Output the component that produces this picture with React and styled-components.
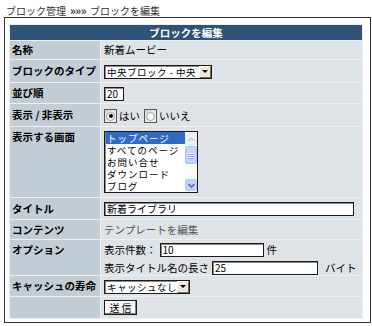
import React from 'react';
import styled, { createGlobalStyle } from 'styled-components';

const Global = createGlobalStyle`
  html, body { margin: 0; padding: 0; background: #fff; }
  body {
    font-family: "Noto Sans CJK JP", "Noto Sans", sans-serif;
    font-size: 10.5px;
    color: #000;
  }
`;

const Page = styled.div`
  width: 372px;
  height: 326px;
  overflow: hidden;
  box-sizing: border-box;
  padding: 3px 0 0 4px;
`;

const Crumb = styled.div`
  font-size: 10px;
  line-height: 14px;
  height: 14px;
  padding-left: 2px;
  color: #333;
  white-space: nowrap;
  b { font-weight: bold; font-size: 11px; letter-spacing: -0.5px; margin: 0 4px; }
`;

const Frame = styled.div`
  width: 367px;
  height: 306px;
  box-sizing: border-box;
  border: 1px solid #333;
  padding: 6px 7px 0 4px;
`;

const Table = styled.table`
  width: 354px;
  border-collapse: separate;
  border-spacing: 1px;
  background: #eef0f2;
  font-size: 10.5px;
  line-height: 14px;
  table-layout: fixed;
`;

const Col = styled.col`
  width: ${p => p.$w}px;
`;

const Th = styled.th`
  background: #2f5376;
  color: #fff;
  font-weight: bold;
  height: 15px;
  padding: 0;
  text-align: center;
  line-height: 15px;
`;

const Label = styled.td`
  background: #c2cdd6;
  font-weight: bold;
  padding: ${p => (p.$top ? '3px 0 0 2px' : '0 0 0 2px')};
  vertical-align: ${p => (p.$top ? 'top' : 'middle')};
  height: ${p => p.$h}px;
  box-sizing: border-box;
  white-space: nowrap;
  overflow: hidden;
`;

const Value = styled.td`
  background: #dee3e7;
  padding: ${p => (p.$top ? '3px 0 0 3px' : '0 0 0 3px')};
  vertical-align: ${p => (p.$top ? 'top' : 'middle')};
  height: ${p => p.$h}px;
  box-sizing: border-box;
  white-space: nowrap;
  color: ${p => (p.$muted ? '#555' : '#000')};
`;

const Field = styled.span`
  display: inline-block;
  vertical-align: middle;
  box-sizing: border-box;
  height: 14px;
  width: ${p => p.$w}px;
  background: #fff;
  border: 1px solid #1a1a1a;
  box-shadow: inset 1px 1px 0 #8a8a8a;
  font-size: 10px;
  line-height: 12px;
  padding-left: 2px;
  overflow: hidden;
`;

const Select = styled.span`
  display: inline-flex;
  vertical-align: middle;
  box-sizing: border-box;
  height: 14px;
  width: ${p => p.$w}px;
  background: #fff;
  border: 1px solid #1a1a1a;
  box-shadow: inset 1px 1px 0 #8a8a8a;
  line-height: 12px;
`;

const SelectText = styled.span`
  flex: 1;
  min-width: 0;
  padding-left: 2px;
  font-size: 9.5px;
  letter-spacing: 0.5px;
  overflow: hidden;
  white-space: nowrap;
`;

const ArrowBtn = styled.span`
  flex: none;
  width: 12px;
  height: 12px;
  box-sizing: border-box;
  background: #ece9d8;
  border: 1px solid;
  border-color: #fff #716f64 #716f64 #fff;
  display: flex;
  align-items: center;
  justify-content: center;
`;

const Triangle = styled.span`
  width: 0;
  height: 0;
  border-left: 3px solid transparent;
  border-right: 3px solid transparent;
  border-top: 3px solid #000;
`;

const RadioRow = styled.span`
  display: inline-flex;
  align-items: center;
  gap: 2px;
`;

const RadioBox = styled.span`
  width: 13px;
  height: 14px;
  box-sizing: border-box;
  border: 1px solid #555;
  background: linear-gradient(135deg, #d8d8d8, #f4f4f4);
  display: inline-flex;
  align-items: center;
  justify-content: center;
  margin-left: ${p => p.$gap || 0}px;
`;

const RadioDot = styled.span`
  width: 9px;
  height: 9px;
  border-radius: 50%;
  box-sizing: border-box;
  background: #fff;
  border: 1px solid #9a9a9a;
  display: flex;
  align-items: center;
  justify-content: center;
  &::after {
    content: '';
    width: 4px;
    height: 4px;
    border-radius: 50%;
    background: ${p => (p.$on ? '#000' : 'transparent')};
  }
`;

const ListBox = styled.div`
  display: flex;
  width: 94px;
  height: 62px;
  box-sizing: border-box;
  border: 1px solid #1a1a1a;
  box-shadow: inset 1px 1px 0 #8a8a8a;
  background: #fff;
`;

const ListItems = styled.div`
  flex: 1;
  min-width: 0;
  padding: 0 0 0 1px;
  overflow: hidden;
`;

const ListItem = styled.div`
  height: 12px;
  line-height: 12px;
  padding-left: 1px;
  font-size: 9.5px;
  letter-spacing: 1px;
  background: ${p => (p.$sel ? '#316ac5' : 'transparent')};
  color: ${p => (p.$sel ? '#fff' : '#000')};
  white-space: nowrap;
  overflow: hidden;
`;

const ScrollBar = styled.div`
  width: 12px;
  flex: none;
  display: flex;
  flex-direction: column;
  background: #fbfbf8;
  padding: 1px 0;
  box-sizing: border-box;
`;

const ScrollBtn = styled.div`
  height: 12px;
  border-radius: 2px;
  background: ${p => (p.$active ? '#c1d3fb' : '#eef2fb')};
  border: 1px solid ${p => (p.$active ? '#b7caf5' : '#e3e8f3')};
  box-sizing: border-box;
  display: flex;
  align-items: center;
  justify-content: center;
`;

const Thumb = styled.div`
  margin-top: 1px;
  height: 18px;
  border-radius: 2px;
  background: #c4d5fc;
  border: 1px solid #a9bff0;
  box-sizing: border-box;
  display: flex;
  flex-direction: column;
  align-items: center;
  justify-content: center;
  gap: 1px;
  span { width: 6px; height: 1px; background: #eef3ff; box-shadow: 0 1px 0 #8eaaf0; }
`;

const Track = styled.div`
  flex: 1;
`;

const OptLine = styled.div`
  display: flex;
  align-items: center;
  height: 14px;
  margin-bottom: ${p => p.$mb || 0}px;
`;

const Suffix = styled.span`
  margin-left: ${p => p.$ml}px;
`;

const Inline = styled.span`
  margin-right: ${p => p.$mr}px;
`;

const Button = styled.span`
  display: inline-flex;
  align-items: center;
  justify-content: center;
  width: 33px;
  height: 15px;
  box-sizing: border-box;
  background: #f6f6f6;
  border: 1px solid #1a1a1a;
  box-shadow: inset -1px -1px 0 #808080, inset 1px 1px 0 #fff;
  font-size: 10px;
  letter-spacing: 2px;
  padding-left: 2px;
  vertical-align: middle;
`;

const Chevron = ({ up, color }) => (
  <svg width="7" height="5" viewBox="0 0 7 5">
    <path d={up ? 'M0.5 4 L3.5 1 L6.5 4' : 'M0.5 1 L3.5 4 L6.5 1'} fill="none" stroke={color} strokeWidth="1.4" />
  </svg>
);

export default function App() {
  return (
    <Page>
      <Global />
      <Crumb>
        ブロック管理<b>»»»</b>ブロックを編集
      </Crumb>
      <Frame>
        <Table>
          <colgroup>
            <Col $w={90} />
            <Col $w={261} />
          </colgroup>
          <tbody>
            <tr>
              <Th colSpan={2}>ブロックを編集</Th>
            </tr>
            <tr>
              <Label $h={18}>名称</Label>
              <Value $h={18}>新着ムービー</Value>
            </tr>
            <tr>
              <Label $h={22}>ブロックのタイプ</Label>
              <Value $h={22}>
                <Select $w={108}>
                  <SelectText>中央ブロック - 中央</SelectText>
                  <ArrowBtn><Triangle /></ArrowBtn>
                </Select>
              </Value>
            </tr>
            <tr>
              <Label $h={20}>並び順</Label>
              <Value $h={20}>
                <Field $w={20}>20</Field>
              </Value>
            </tr>
            <tr>
              <Label $h={22}>表示 / 非表示</Label>
              <Value $h={22}>
                <RadioRow>
                  <RadioBox><RadioDot $on /></RadioBox>
                  <span>はい</span>
                  <RadioBox $gap={2}><RadioDot /></RadioBox>
                  <span>いいえ</span>
                </RadioRow>
              </Value>
            </tr>
            <tr>
              <Label $h={70} $top>表示する画面</Label>
              <Value $h={70}>
                <ListBox>
                  <ListItems>
                    <ListItem $sel>トップページ</ListItem>
                    <ListItem>すべてのページ</ListItem>
                    <ListItem>お問い合せ</ListItem>
                    <ListItem>ダウンロード</ListItem>
                    <ListItem>ブログ</ListItem>
                  </ListItems>
                  <ScrollBar>
                    <ScrollBtn><Chevron up color="#b9c6de" /></ScrollBtn>
                    <Thumb><span /><span /><span /></Thumb>
                    <Track />
                    <ScrollBtn $active><Chevron color="#4d6185" /></ScrollBtn>
                  </ScrollBar>
                </ListBox>
              </Value>
            </tr>
            <tr>
              <Label $h={21}>タイトル</Label>
              <Value $h={21}>
                <Field $w={250}>新着ライブラリ</Field>
              </Value>
            </tr>
            <tr>
              <Label $h={19}>コンテンツ</Label>
              <Value $h={19} $muted>テンプレートを編集</Value>
            </tr>
            <tr>
              <Label $h={35} $top>オプション</Label>
              <Value $h={35} $top>
                <OptLine $mb={4}>
                  <Inline $mr={3}>表示件数：</Inline>
                  <Field $w={104}>10</Field>
                  <Suffix $ml={3}>件</Suffix>
                </OptLine>
                <OptLine>
                  <Inline $mr={3}>表示タイトル名の長さ</Inline>
                  <Field $w={106}>25</Field>
                  <Suffix $ml={7}>バイト</Suffix>
                </OptLine>
              </Value>
            </tr>
            <tr>
              <Label $h={20}>キャッシュの寿命</Label>
              <Value $h={20}>
                <Select $w={86}>
                  <SelectText>キャッシュなし</SelectText>
                  <ArrowBtn><Triangle /></ArrowBtn>
                </Select>
              </Value>
            </tr>
            <tr>
              <Label $h={21}></Label>
              <Value $h={21}>
                <Button>送信</Button>
              </Value>
            </tr>
          </tbody>
        </Table>
      </Frame>
    </Page>
  );
}
